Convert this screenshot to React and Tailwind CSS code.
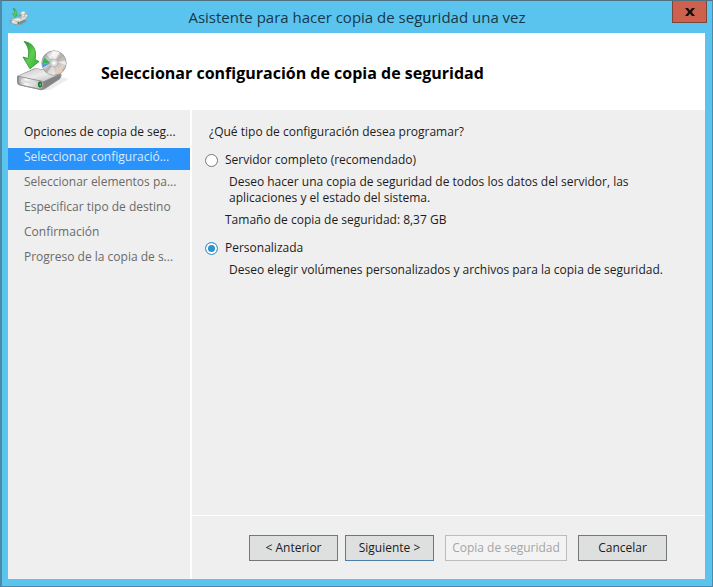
import { useState } from 'react';

const steps = [
  { id: 1, label: 'Opciones de copia de seg...', state: 'done' },
  { id: 2, label: 'Seleccionar configuració...', state: 'current' },
  { id: 3, label: 'Seleccionar elementos pa...', state: 'pending' },
  { id: 4, label: 'Especificar tipo de destino', state: 'pending' },
  { id: 5, label: 'Confirmación', state: 'pending' },
  { id: 6, label: 'Progreso de la copia de s...', state: 'pending' },
];

const stepStyles = {
  done: 'text-[#1c1c1c]',
  current: 'bg-[#2a92fb] text-[#d9ecff]',
  pending: 'text-[#6a6a6a]',
};

function BackupIcon({ className }) {
  return (
    <svg viewBox="0 0 52 52" className={className} aria-hidden="true">
      <defs>
        <linearGradient id="driveTop" x1="0" y1="0" x2="1" y2="1">
          <stop offset="0" stopColor="#c4c4c4" />
          <stop offset="0.5" stopColor="#ececec" />
          <stop offset="1" stopColor="#b4b4b4" />
        </linearGradient>
        <linearGradient id="driveFront" x1="0" y1="0" x2="1" y2="0">
          <stop offset="0" stopColor="#9a9a9a" />
          <stop offset="0.3" stopColor="#fafafa" />
          <stop offset="1" stopColor="#b4b4b4" />
        </linearGradient>
        <linearGradient id="disc" x1="0" y1="0" x2="1" y2="1">
          <stop offset="0" stopColor="#8f8f8f" />
          <stop offset="0.3" stopColor="#f2f2f2" />
          <stop offset="0.5" stopColor="#b3aeac" />
          <stop offset="0.75" stopColor="#ded6d2" />
          <stop offset="1" stopColor="#858585" />
        </linearGradient>
        <linearGradient id="arrow" x1="0" y1="0" x2="1" y2="1">
          <stop offset="0" stopColor="#1f8a2a" />
          <stop offset="0.5" stopColor="#62cc4e" />
          <stop offset="1" stopColor="#2fae36" />
        </linearGradient>
      </defs>
      <path d="M26 49 L45 36 L53 38 L34 49 Z" fill="#000" opacity="0.07" />
      <path d="M1 35 L18 27.500 Q20 27 22 27.500 L44 31.500 Q46 32.500 45.500 35 L44 38 L29 48 Q27 49.500 24 49 L4 44.500 Q1 43.500 1 41 Z" fill="#8f8f8f" />
      <path d="M2 35 L19 28 H22 L44.500 32.500 L27 40.500 Z" fill="url(#driveTop)" />
      <path d="M3.500 35.500 L25 40 Q27.500 40.500 27.300 43 L26.500 46 Q26 48.500 23.500 48 L5 44 Q2 43 2 41 V37 Q2 35 3.500 35.500 Z" fill="url(#driveFront)" stroke="#858585" strokeWidth="0.700" />
      <path d="M5 38.500 L20 41.500 V44 L5 41 Z" fill="#dedede" />
      <path d="M28 41 L44 33.500 L43.500 37.500 L28 47 Z" fill="#838383" />
      <ellipse cx="24" cy="43.500" rx="2" ry="3" fill="#17692a" />
      <ellipse cx="24.300" cy="43.500" rx="1" ry="1.600" fill="#3fce4c" />
      <circle cx="38" cy="22" r="12.200" fill="url(#disc)" stroke="#929292" strokeWidth="0.800" />
      <path d="M38 22 L35.500 10.300 A12 12 0 0 1 43.500 11.300 Z" fill="#fff" opacity="0.650" />
      <path d="M38 22 L31 32 A12 12 0 0 0 39 34 Z" fill="#fff" opacity="0.450" />
      <path d="M38 22 L27 17 A12 12 0 0 1 30 13 Z" fill="#777" opacity="0.350" />
      <path d="M34.500 21.500 L28 16.500 L26 23 Z" fill="#35b45d" />
      <path d="M34.500 22 L26 22.500 L27 26.500 Z" fill="#4b9bd4" />
      <path d="M39 25 L47 30 L43 33 Z" fill="#f0ccb8" />
      <path d="M41 21 L49.500 20 L50 24 Z" fill="#f5f5f5" opacity="0.800" />
      <circle cx="38" cy="22" r="4" fill="#d9d9d9" stroke="#a7a7a7" strokeWidth="0.600" />
      <circle cx="38" cy="22" r="1.600" fill="#fff" />
      <path d="M8 0.500 C16 1.500 21.500 8 19 18.500 L23 20.500 L14 27.800 L7 16 L12 17.500 C13.500 11 12.500 5 8 0.500 Z" fill="url(#arrow)" stroke="#23912f" strokeWidth="0.800" />
    </svg>
  );
}

function TitleBar() {
  return (
    <header className="flex h-8 shrink-0 items-start bg-[#5bc4ee]">
      <div className="w-10 pl-2 pt-[7px]">
        <BackupIcon className="size-[18px]" />
      </div>
      <h1 className="flex-1 text-center text-[15px] leading-8 text-[#17384a]">
        Asistente para hacer copia de seguridad una vez
      </h1>
      <button
        type="button"
        aria-label="Cerrar"
        className="mr-[5px] flex h-[22px] w-[35px] items-center justify-center border border-t-0 border-[#7a4640] bg-[#cd614e]"
      >
        <svg viewBox="0 0 10 8" className="h-2 w-2.5" aria-hidden="true">
          <path d="M0 0 H3 L5 2.500 L7 0 H10 L6.700 4 L10 8 H7 L5 5.500 L3 8 H0 L3.300 4 Z" fill="#111" />
        </svg>
      </button>
    </header>
  );
}

function StepList() {
  return (
    <nav className="w-[184px] shrink-0 border-r-2 border-white pt-[13px]">
      <ol className="flex flex-col gap-[3px]">
        {steps.map((step) => (
          <li
            key={step.id}
            aria-current={step.state === 'current' ? 'step' : undefined}
            className={`whitespace-nowrap pb-1 pl-4 leading-[18px] ${stepStyles[step.state]}`}
          >
            {step.label}
          </li>
        ))}
      </ol>
    </nav>
  );
}

function RadioOption({ value, label, selected, onSelect }) {
  return (
    <label className="flex items-center gap-[7px] leading-5">
      <input
        type="radio"
        name="configuracion"
        value={value}
        checked={selected === value}
        onChange={() => onSelect(value)}
        className="size-[13px] appearance-none rounded-full border border-[#777] bg-white checked:border-[#3a9bd0] checked:bg-[#2b93cd] checked:shadow-[inset_0_0_0_2px_white]"
      />
      {label}
    </label>
  );
}

export default function App() {
  const [selected, setSelected] = useState('personalizada');

  return (
    <div className="flex min-h-screen flex-col border border-l-2 border-[#4b8aa8] border-t-[#50717f] bg-[#5bc4ee] font-['Open_Sans','Noto_Sans',sans-serif] text-[12px] text-[#1c1c1c]">
      <TitleBar />
      <main className="mb-[7px] ml-1.5 mr-[7px] flex flex-1 flex-col bg-[#efefef]">
        <div className="flex h-[77px] shrink-0 items-start bg-white pl-2 pt-2">
          <BackupIcon className="size-[52px]" />
          <h2 className="pl-[33px] pt-5 text-[16px] font-bold leading-6 text-black">
            Seleccionar configuración de copia de seguridad
          </h2>
        </div>

        <div className="flex flex-1">
          <StepList />
          <div className="flex min-w-0 flex-1 flex-col">
            <fieldset className="flex-1 pl-[13px] pr-8 pt-3">
              <legend className="float-left w-full pl-1 leading-5">¿Qué tipo de configuración desea programar?</legend>
              <div className="clear-both pt-2">
                <RadioOption
                  value="completo"
                  label="Servidor completo (recomendado)"
                  selected={selected}
                  onSelect={setSelected}
                />
                <p className="max-w-[430px] pl-6 pt-1 leading-4">
                  Deseo hacer una copia de seguridad de todos los datos del servidor, las aplicaciones y el estado del sistema.
                </p>
                <p className="pl-5 pt-1 leading-5">Tamaño de copia de seguridad: 8,37 GB</p>
              </div>
              <div className="pt-2">
                <RadioOption
                  value="personalizada"
                  label="Personalizada"
                  selected={selected}
                  onSelect={setSelected}
                />
                <p className="pl-6 pt-1 leading-4">
                  Deseo elegir volúmenes personalizados y archivos para la copia de seguridad.
                </p>
              </div>
            </fieldset>

            <footer className="flex justify-end gap-[7px] border-t border-white pb-[18px] pr-[38px] pt-[19px]">
              <button type="button" className="h-[26px] w-[89px] border border-[#777] bg-[#dedfdf]">
                &lt; Anterior
              </button>
              <button type="button" className="h-[26px] w-[89px] border border-[#4c7ea8] bg-[#dedfdf]">
                Siguiente &gt;
              </button>
              <button
                type="button"
                disabled
                className="ml-1 h-[26px] w-[122px] border border-[#bcbcbc] bg-[#f3f3f3] text-[#a5a5a5]"
              >
                Copia de seguridad
              </button>
              <button type="button" className="ml-1 h-[26px] w-[89px] border border-[#777] bg-[#dedfdf]">
                Cancelar
              </button>
            </footer>
          </div>
        </div>
      </main>
    </div>
  );
}
